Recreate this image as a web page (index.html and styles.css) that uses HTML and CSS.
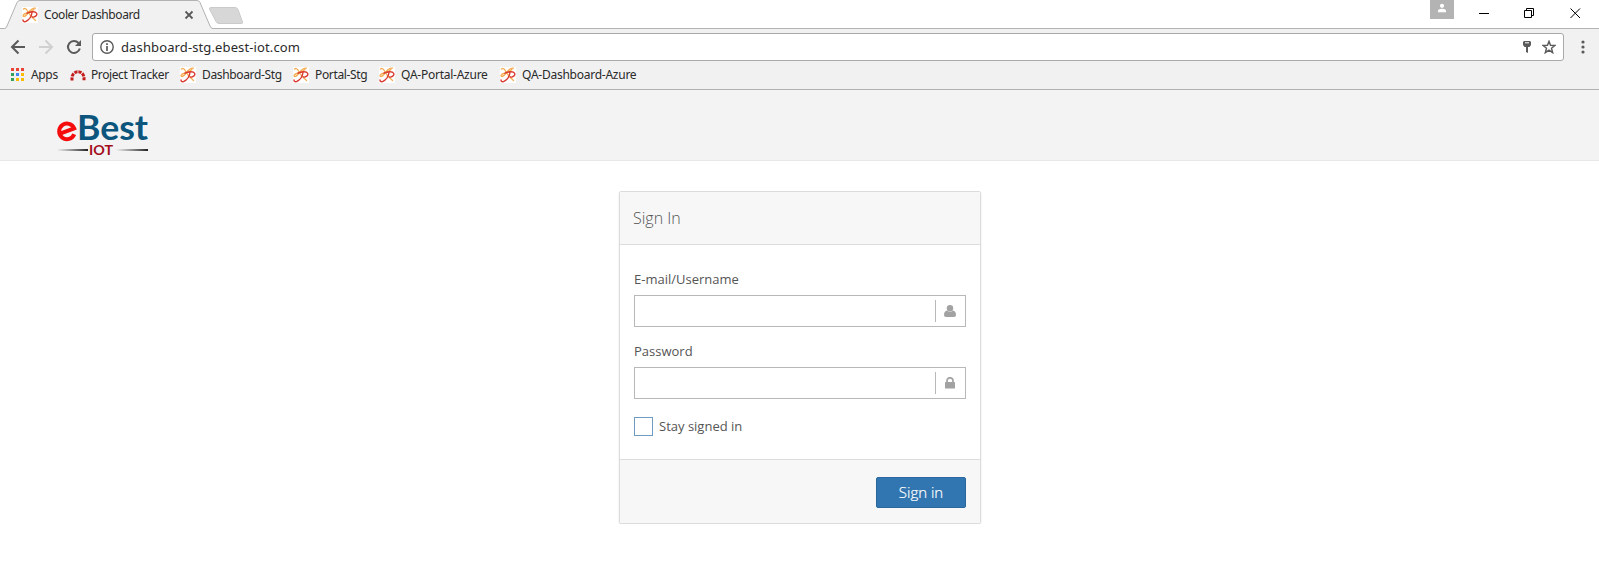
FILE: index.html
```
<!DOCTYPE html>
<html lang="en">
<head>
<meta charset="utf-8">
<title>Cooler Dashboard</title>
<link rel="stylesheet" href="styles.css">
</head>
<body>
<svg class="defs" width="0" height="0">
  <symbol id="fav" viewBox="0 0 16 16">
    <rect width="16" height="16" fill="#fff"/>
    <g fill="none" stroke-linecap="round">
      <path d="M1.500 2C3 .8 4.500 1.800 5.500 4S9 9.500 13.500 13.500M13.500 1.200C11 .8 9 2 6.500 5.500S3.500 9.500 1.800 9.500S1.300 7 3.500 6.500S9 5.500 12 2.500" stroke="#f6ad55" stroke-width="1.300"/>
      <path d="M5 6.200C8 4.500 13.500 4 14.600 6.200S12.500 10.500 10.500 10M10 5.500C9.500 9.500 7 13 3.500 14.600C2 15 1 14.200 1 13" stroke="#d93a30" stroke-width="1.400"/>
    </g>
  </symbol>
</svg>
<header class="browser">
  <div class="tabstrip">
    <svg class="tabshape" width="250" height="29" viewBox="0 0 250 29">
      <path d="M0 28.500H4.500Q6 28.500 7 26L17 2.500Q18 .5 20 .5H197Q199 .5 200 2.500L210 26Q211 28.500 213 28.500H250V29H0Z" fill="#f1f1f1"/>
      <path d="M0 28.500H4.500Q6 28.500 7 26L17 2.500Q18 .5 20 .5H197Q199 .5 200 2.500L210 26Q211 28.500 213 28.500H250" fill="none" stroke="#b2b2b2"/>
      <path d="M211 7.500H235Q237 7.500 238 9.500L242.500 22Q243 23.500 241.500 23.500H219Q217 23.500 216 21.500L209.500 9Q209 7.500 211 7.500Z" fill="#d7d7d7" stroke="#cacaca"/>
    </svg>
    <div class="tab"><svg class="fav"><use href="#fav"/></svg><span class="tab-title">Cooler Dashboard</span>
      <svg class="tab-close" width="10" height="10"><path d="M1.500 1.500L8.500 8.500M8.500 1.500L1.500 8.500" stroke="#5a5a5a" stroke-width="1.800"/></svg></div>
    <div class="window">
      <svg class="profile" width="24" height="19"><rect width="24" height="19" fill="#b3b3b3"/><circle cx="12" cy="5.800" r="2.100" fill="#fff"/><path d="M8 12.200V11Q8 8.800 12 8.800T16 11V12.200Z" fill="#fff"/></svg>
      <svg class="controls" width="125" height="28" fill="none" stroke="#000"><path d="M5 13.500H15M50.500 10.500H57.500V17.500H50.500ZM52.500 10V8.500H59.500V15.500H58M96.500 8.500L106 18M106 8.500L96.500 18"/></svg>
    </div>
  </div>
  <div class="toolbar">
    <svg class="nav" width="84" height="28" fill="none" stroke-width="2">
      <path d="M25 14H12.500M18.500 7.500L12 14L18.500 20.500" stroke="#5a5a5a"/>
      <path d="M39 14H51.500M45.500 7.500L52 14L45.500 20.500" stroke="#d0d0d0"/>
      <path d="M78.500 10A6 6 0 1 0 79.800 15.500" stroke="#5a5a5a"/><path d="M81 7V13H75Z" fill="#5a5a5a"/>
    </svg>
    <div class="omnibox">
      <svg class="info" width="14" height="14"><circle cx="7" cy="7" r="6.200" fill="none" stroke="#5a5a5a" stroke-width="1.400"/><path d="M7 3.300V5M7 6V11" stroke="#5a5a5a" stroke-width="1.700"/></svg>
      <span class="url">dashboard-stg.ebest-iot.com</span>
      <svg class="key" width="8" height="12"><path d="M1 0H7L8 1V4L6.500 6H5V12L3 11V6H1.500L0 4V1Z" fill="#5a5a5a"/><path d="M2 1.800H6" stroke="#fff"/></svg>
      <svg class="star" width="14" height="14"><path d="M7 1.300L8.500 5.300L13 5.500L9.500 8.300L10.700 12.700L7 10.200L3.300 12.700L4.500 8.300L1 5.500L5.500 5.300Z" fill="none" stroke="#5a5a5a" stroke-width="1.400"/></svg>
    </div>
    <svg class="menu" width="4" height="14" fill="#5a5a5a"><circle cx="2" cy="2" r="1.600"/><circle cx="2" cy="7" r="1.600"/><circle cx="2" cy="12" r="1.600"/></svg>
  </div>
  <nav class="bookmarks">
    <a class="bm apps"><svg width="13" height="13"><path d="M0 0h3v3H0zM5 0h3v3H5zM10 0h3v3h-3z" fill="#ea4335"/><path d="M0 5h3v3H0zM0 10h3v3H0z" fill="#34a05a"/><path d="M5 5h3v3H5z" fill="#4285f4"/><path d="M10 5h3v3h-3zM5 10h3v3H5zM10 10h3v3h-3z" fill="#fbbc05"/></svg><span>Apps</span></a>
    <a class="bm tracker"><svg width="16" height="12"><path d="M2 11.500V9A6 6.300 0 0 1 14 9V11.500" fill="none" stroke="#c41d1d" stroke-width="3" stroke-dasharray="3.200 .9"/></svg><span>Project Tracker</span></a>
    <a class="bm dash"><svg class="fav"><use href="#fav"/></svg><span>Dashboard-Stg</span></a>
    <a class="bm portal"><svg class="fav"><use href="#fav"/></svg><span>Portal-Stg</span></a>
    <a class="bm qap"><svg class="fav"><use href="#fav"/></svg><span>QA-Portal-Azure</span></a>
    <a class="bm qad"><svg class="fav"><use href="#fav"/></svg><span>QA-Dashboard-Azure</span></a>
  </nav>
</header>
<div class="site-header">
  <svg class="logo" width="96" height="47" viewBox="0 0 96 47">
    <defs>
      <linearGradient id="fadeL"><stop stop-color="#333" stop-opacity="0"/><stop offset="1" stop-color="#222"/></linearGradient>
    </defs>
    <g transform="rotate(-20 11 17.500)"><path d="M3.500 18H18.500A7.800 7.800 0 1 0 16.500 23.500" fill="none" stroke="#f50d0d" stroke-width="4"/></g>
    <text class="logo-best" x="21" y="26.500" textLength="71" lengthAdjust="spacingAndGlyphs">Best</text>
    <rect x="1" y="36" width="31" height="2" fill="url(#fadeL)"/><rect x="60" y="36" width="32" height="2" fill="url(#fadeL)"/>
    <text class="logo-iot" x="33" y="41.500" textLength="24" lengthAdjust="spacingAndGlyphs">IOT</text>
  </svg>
</div>
<main class="page">
  <form class="card">
    <h1 class="card-head"><span>Sign In</span></h1>
    <div class="card-body">
      <label class="label">E-mail/Username</label>
      <div class="field"><span class="addon"><svg width="12" height="12" fill="#a2a2a2"><circle cx="6" cy="3.200" r="3.200"/><path d="M3 5.500Q6 8 9 5.500Q12 6 12 10Q12 12 10 12H2Q0 12 0 10Q0 6 3 5.500Z"/></svg></span></div>
      <label class="label second">Password</label>
      <div class="field"><span class="addon"><svg width="12" height="12"><path d="M3 6V3.800A3 3 0 0 1 9 3.800V6" fill="none" stroke="#a2a2a2" stroke-width="1.700"/><rect x="1" y="5" width="10" height="6.500" rx=".6" fill="#a2a2a2"/></svg></span></div>
      <label class="stay"><i class="box"></i><span>Stay signed in</span></label>
    </div>
    <div class="card-foot"><button type="button" class="btn">Sign in</button></div>
  </form>
</main>
</body>
</html>
```
FILE: styles.css
```
* { box-sizing: border-box; }
body { margin: 0; background: #fff; font-family: "Open Sans", sans-serif; color: #555; }
svg { display: block; flex: none; }
.defs { position: absolute; }
.fav { width: 16px; height: 16px; }
.browser { height: 90px; background: #f1f1f1; border-bottom: 1px solid #b2b2b2; font-family: "Noto Sans", sans-serif; font-size: 12px; color: #2a2a2a; }
.tabstrip { position: relative; height: 29px; background: #fff; border-bottom: 1px solid #b2b2b2; display: flex; justify-content: space-between; }
.tabshape { position: absolute; left: 0; top: 0; }
.tab { position: relative; width: 194px; height: 29px; padding-left: 22px; display: flex; align-items: center; gap: 6px; }
.tab-title { flex: 1; white-space: nowrap; letter-spacing: -.4px; }
.window { display: flex; }
.profile { margin-right: 20px; }
.toolbar { height: 32px; padding-top: 4px; display: flex; }
.nav { margin-right: 8px; }
.omnibox { width: 1472px; height: 28px; border: 1px solid #a9a9a9; border-radius: 3px; background: #fff; display: flex; align-items: center; padding: 0 7px; }
.url { flex: 1; margin-left: 7px; font-size: 13px; letter-spacing: .12px; }
.key { margin-right: 11px; }
.menu { margin: 7px 0 0 17px; }
.bookmarks { height: 28px; padding: 0 0 1px 11px; display: flex; align-items: center; }
.bm { display: flex; align-items: center; white-space: nowrap; }
.bm span { letter-spacing: -.35px; margin-left: 5px; padding-bottom: 1px; }
.apps { width: 59px; }
.apps span { margin-left: 7px; }
.tracker { width: 110px; }
.tracker span { letter-spacing: -.4px; }
.dash { width: 113px; }
.dash span, .portal span, .qap span, .qad span { margin-left: 6px; }
.qap span, .qad span { letter-spacing: -.25px; }
.portal { width: 86px; }
.qap { width: 121px; }
.site-header { height: 71px; background: #f3f3f3; border-bottom: 1px solid #e7e7e7; padding: 23px 0 0 56px; }
.logo-best { font: 34px Lato, sans-serif; font-weight: 700; fill: #0c557c; }
.logo-iot { font: bold 13px Lato, sans-serif; fill: #a30d1c; }
.page { padding: 30px 0 0 619px; }
.card { width: 362px; height: 333px; border: 1px solid #dcdcdc; border-radius: 2px; box-shadow: 0 1px 2px rgba(0,0,0,.12); display: flex; flex-direction: column; }
.card-head { margin: 0; height: 53px; padding: 0 13px; background: #f7f7f7; border-bottom: 1px solid #dcdcdc; font-size: 16px; font-weight: 300; line-height: 52px; }
.card-body { height: 214px; padding: 24px 14px 0; font-size: 13px; }
.label { display: block; height: 26px; line-height: 20px; }
.label.second { margin-top: 14px; }
.field { height: 32px; border: 1px solid #b8b8b8; display: flex; justify-content: flex-end; align-items: center; }
.addon { width: 30px; height: 22px; padding-right: 2px; border-left: 1px solid #b8b8b8; display: flex; align-items: center; justify-content: center; }
.stay { display: flex; align-items: center; gap: 6px; margin-top: 18px; }
.stay span { padding-bottom: 1px; line-height: 17px; }
.box { width: 19px; height: 19px; border: 1px solid #6f9bc0; background: #fff; }
.card-foot { flex: 1; background: #f7f7f7; border-top: 1px solid #dcdcdc; padding: 17px 14px 0; display: flex; justify-content: flex-end; align-items: flex-start; }
.btn { width: 90px; height: 31px; padding: 0 0 2px; border: 1px solid #2a679f; border-radius: 2px; background: #3276b1; color: #fff; font: 300 15px "Open Sans", sans-serif; -webkit-text-stroke: .2px #fff; }
```
